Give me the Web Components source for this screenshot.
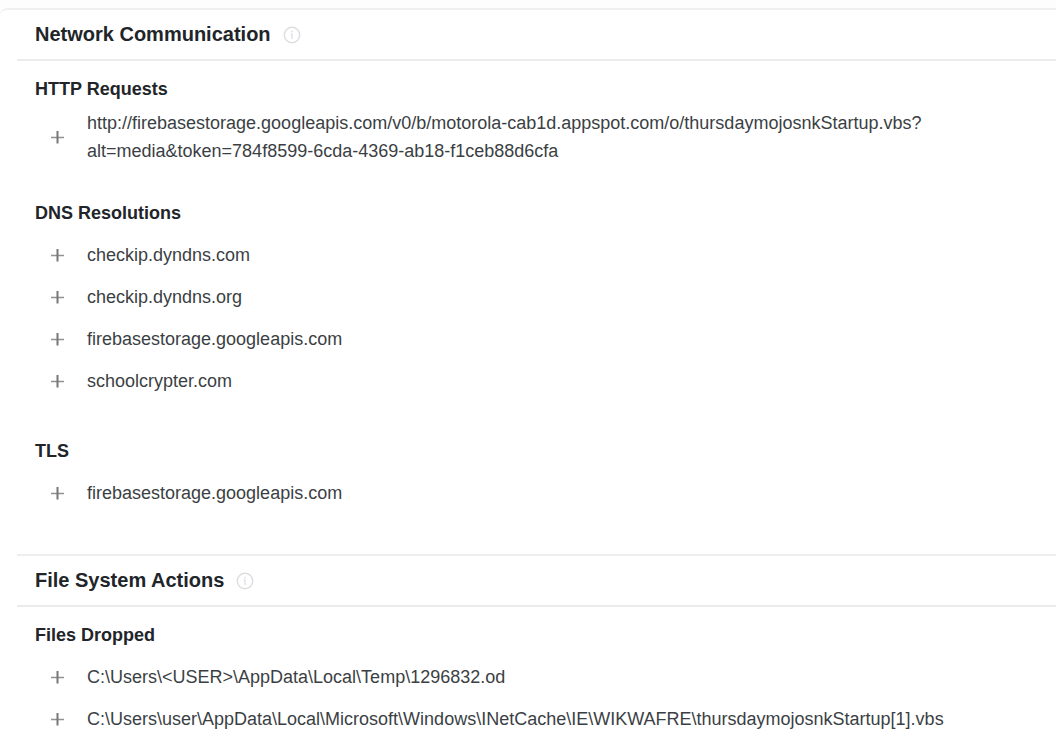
<!DOCTYPE html>
<html lang="en">
<head>
<meta charset="utf-8">
<title>Behavior report</title>
<style>
  body { margin: 0; background: #fff; color: #212529; font-family: "Liberation Sans", Arial, sans-serif; font-size: 18px; line-height: 28px; }
</style>
</head>
<body>
<report-panel>
  <report-section heading="Network Communication">
    <report-group heading="HTTP Requests" compact>
      <report-item>http://firebasestorage.googleapis.com/v0/b/motorola-cab1d.appspot.com/o/thursdaymojosnkStartup.vbs?<wbr>alt=media&amp;token=784f8599-6cda-4369-ab18-f1ceb88d6cfa</report-item>
    </report-group>
    <report-group heading="DNS Resolutions">
      <report-item>checkip.dyndns.com</report-item>
      <report-item>checkip.dyndns.org</report-item>
      <report-item>firebasestorage.googleapis.com</report-item>
      <report-item>schoolcrypter.com</report-item>
    </report-group>
    <report-group heading="TLS">
      <report-item>firebasestorage.googleapis.com</report-item>
    </report-group>
  </report-section>
  <report-section heading="File System Actions">
    <report-group heading="Files Dropped">
      <report-item>C:\Users\&lt;USER&gt;\AppData\Local\Temp\1296832.od</report-item>
      <report-item>C:\Users\user\AppData\Local\Microsoft\Windows\INetCache\IE\WIKWAFRE\thursdaymojosnkStartup[1].vbs</report-item>
    </report-group>
  </report-section>
</report-panel>

<script>
function define(name, html, setup) {
  const template = document.createElement('template');
  template.innerHTML = html;
  customElements.define(name, class extends HTMLElement {
    constructor() {
      super();
      this.attachShadow({ mode: 'open' }).append(template.content.cloneNode(true));
    }
    connectedCallback() { if (setup) setup(this, this.shadowRoot); }
  });
}

const setHeading = (host, root) => {
  root.querySelector('.title').textContent = host.getAttribute('heading');
};

define('report-panel', `
  <style>
    :host { display: block; padding-top: 8px; margin-right: 8px; background: #fdfdfd; }
    main { border-top: 2px solid #f0f0f0; border-top-left-radius: 8px; background: #fff; padding-left: 17px; }
  </style>
  <main><slot></slot></main>`);

define('report-section', `
  <style>
    :host { display: block; }
    :host(:not(:last-child)) { padding-bottom: 33px; }
    :host(:not(:first-child)) { border-top: 2px solid #eee; }
    header { display: flex; align-items: center; gap: 12px; padding: 10px 18px 11px; border-bottom: 2px solid #ebebeb; }
    h2 { margin: 0; font-size: 20px; line-height: 28px; font-weight: 700; }
    .groups { display: grid; padding: 14px 0 14px 18px; }
  </style>
  <section>
    <header><h2 class="title"></h2><info-button></info-button></header>
    <div class="groups"><slot></slot></div>
  </section>`, setHeading);

define('info-button', `
  <style>
    :host { display: flex; padding-top: 2px; }
    button { display: flex; padding: 0; border: 0; background: none; color: #dcdee2; }
  </style>
  <button type="button" aria-label="More information">
    <svg width="18" height="18" viewBox="0 0 18 18" fill="none" stroke="currentColor" aria-hidden="true">
      <circle cx="9" cy="9" r="7.7" stroke-width="1.5"/>
      <path d="M9 8v5M7.8 8H9" stroke-width="1.3"/>
      <circle cx="9" cy="5.6" r=".9" fill="currentColor" stroke="none"/>
    </svg>
  </button>`);

define('report-group', `
  <style>
    :host { display: block; }
    :host(:not(:last-child)) { padding-bottom: 42px; }
    h3 { margin: 0; font-size: 18px; line-height: 28px; font-weight: 700; }
    .items { display: grid; gap: 14px; padding-top: 14px; }
    :host([compact]) .items { padding-top: 6px; }
    :host([compact]:not(:last-child)) { padding-bottom: 34px; }
  </style>
  <h3 class="title"></h3>
  <div class="items" role="list"><slot></slot></div>`, setHeading);

define('report-item', `
  <style>
    :host { display: flex; align-items: center; gap: 16px; padding-left: 8px; color: #3b3f44; }
    button { display: grid; place-items: center; flex: none; width: 28px; height: 28px; padding: 0; border: 0; background: none; color: #777; }
    .value { min-width: 0; overflow-wrap: anywhere; }
  </style>
  <button type="button" aria-label="Expand">
    <svg width="13" height="13" viewBox="0 0 13 13" stroke="currentColor" aria-hidden="true">
      <path d="M6.5 0v12.5" stroke-width="2"/><path d="M0 6.5h13" stroke-width="1.5" opacity=".8"/>
    </svg>
  </button>
  <span class="value"><slot></slot></span>`, host => host.setAttribute('role', 'listitem'));
</script>
</body>
</html>
